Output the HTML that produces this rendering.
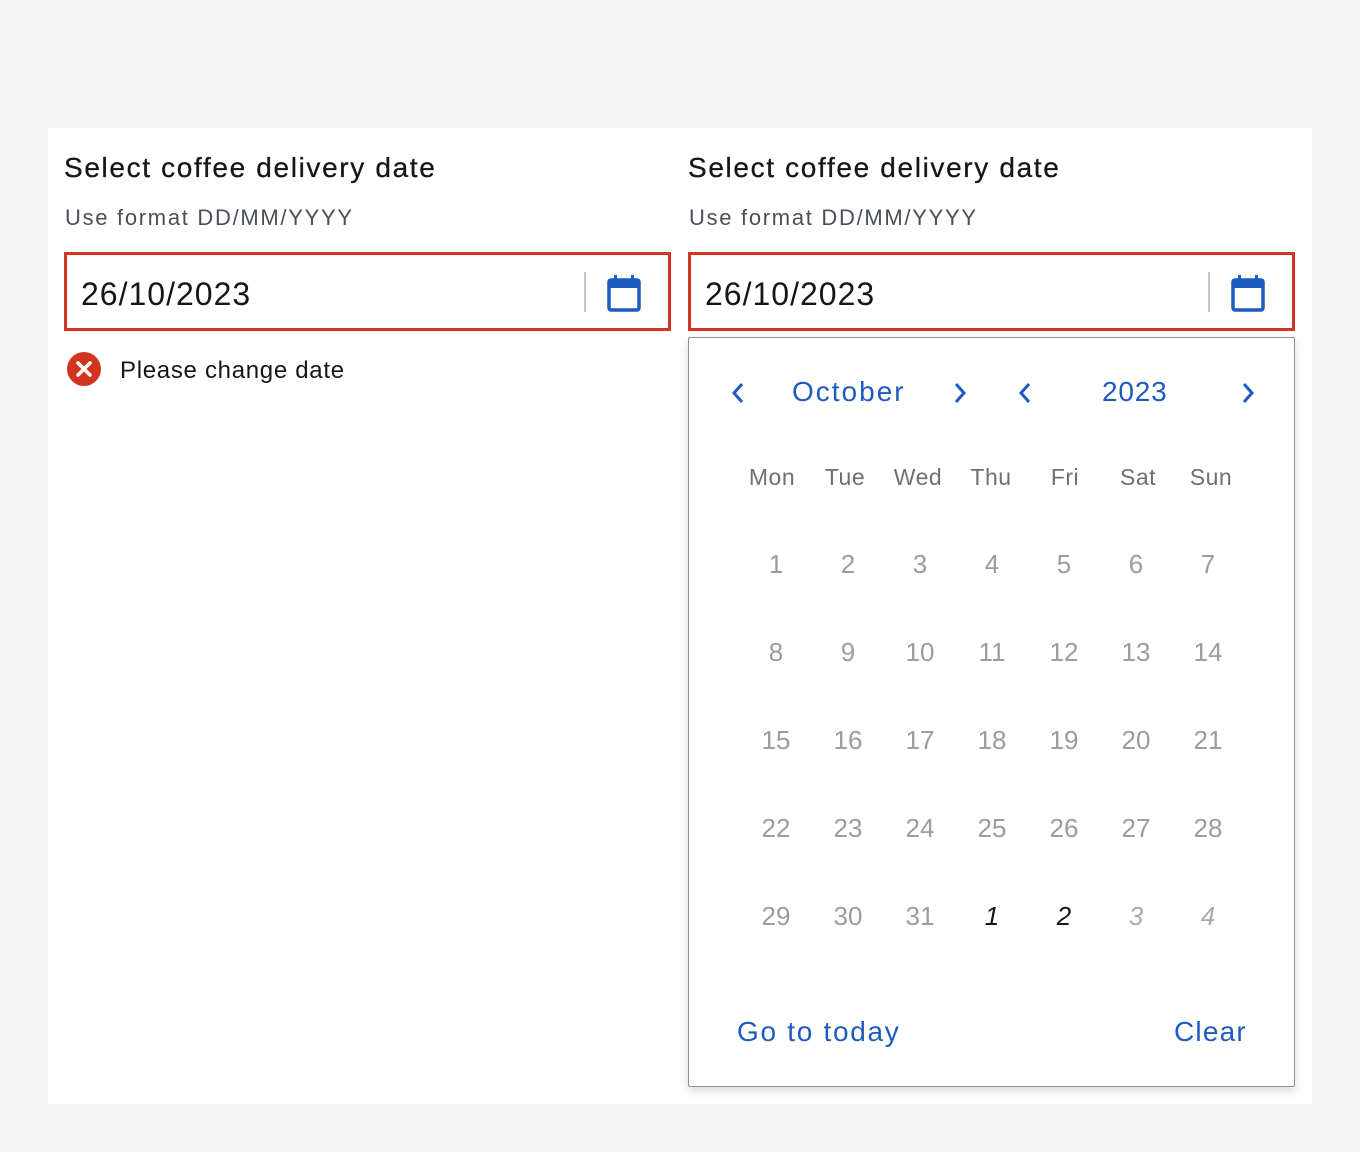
<!DOCTYPE html>
<html><head><style>
body{margin:0;width:1360px;height:1152px;background:#f4f4f4;font-family:"Liberation Sans","DejaVu Sans",sans-serif;position:relative;overflow:hidden}
.panel{position:absolute;left:48px;top:128px;width:1264px;height:976px;background:#fff}
.a{position:absolute;white-space:nowrap}
.t{font-size:28px;color:#161616;letter-spacing:1.65px;-webkit-text-stroke:0.3px #161616}
.h{font-size:22px;color:#4a4f57;letter-spacing:1.7px}
.inp{position:absolute;top:252px;width:601px;height:73px;border:3px solid #d2351f;background:#fff}
.inp .v{position:absolute;left:14px;top:21px;font-size:32px;color:#161616;letter-spacing:1px}
.inp .sep{position:absolute;left:517px;top:17px;width:2px;height:40px;background:#c6c6c6}
.inp svg{position:absolute;left:539px;top:18px}
.cal{position:absolute;left:688px;top:337px;width:605px;height:748px;border:1px solid #8d9199;border-radius:2px;background:#fff;box-shadow:0 4px 10px rgba(0,0,0,.15)}
.b{color:#1d5bbf}
.c{position:absolute;width:60px;text-align:center;font-size:26px;color:#9a9ca0}
.d{position:absolute;width:72px;text-align:center;font-size:23px;color:#6a6f78;letter-spacing:0.5px}
</style></head><body>
<div class="panel"></div>
<div class="a t" style="left:64px;top:152px">Select coffee delivery date</div>
<div class="a t" style="left:688px;top:152px">Select coffee delivery date</div>
<div class="a h" style="left:65px;top:205px">Use format DD/MM/YYYY</div>
<div class="a h" style="left:689px;top:205px">Use format DD/MM/YYYY</div>
<div class="inp" style="left:64px"><div class="v">26/10/2023</div><div class="sep"></div>
<svg width="36" height="40" viewBox="0 0 36 40"><rect x="3" y="7" width="30" height="30" rx="2" fill="none" stroke="#1d5bbf" stroke-width="3.5"/><rect x="3" y="7" width="30" height="8" fill="#1d5bbf"/><rect x="8" y="2" width="3" height="7" fill="#1d5bbf"/><rect x="25" y="2" width="3" height="7" fill="#1d5bbf"/></svg></div>
<div class="inp" style="left:688px"><div class="v">26/10/2023</div><div class="sep"></div>
<svg width="36" height="40" viewBox="0 0 36 40"><rect x="3" y="7" width="30" height="30" rx="2" fill="none" stroke="#1d5bbf" stroke-width="3.5"/><rect x="3" y="7" width="30" height="8" fill="#1d5bbf"/><rect x="8" y="2" width="3" height="7" fill="#1d5bbf"/><rect x="25" y="2" width="3" height="7" fill="#1d5bbf"/></svg></div>
<svg class="a" style="left:66px;top:351px" width="36" height="36"><circle cx="18" cy="18" r="17" fill="#d2351f"/><path d="M12 12L24 24M24 12L12 24" stroke="#fff" stroke-width="3.5" stroke-linecap="round"/></svg>
<div class="a" style="left:120px;top:357px;font-size:24px;color:#161616;letter-spacing:0.7px">Please change date</div>
<div class="cal"></div>
<svg class="a" style="left:728px;top:381px" width="20" height="24"><path d="M14 3L6 12L14 21" fill="none" stroke="#1d5bbf" stroke-width="3"/></svg>
<svg class="a" style="left:950px;top:381px" width="20" height="24"><path d="M6 3L14 12L6 21" fill="none" stroke="#1d5bbf" stroke-width="3"/></svg>
<svg class="a" style="left:1015px;top:381px" width="20" height="24"><path d="M14 3L6 12L14 21" fill="none" stroke="#1d5bbf" stroke-width="3"/></svg>
<svg class="a" style="left:1238px;top:381px" width="20" height="24"><path d="M6 3L14 12L6 21" fill="none" stroke="#1d5bbf" stroke-width="3"/></svg>
<div class="a b" style="left:792px;top:376px;font-size:28px;letter-spacing:2px">October</div>
<div class="a b" style="left:1102px;top:376px;font-size:28px;letter-spacing:0.8px">2023</div>
<div class="d" style="left:736px;top:464px">Mon</div><div class="d" style="left:809px;top:464px">Tue</div><div class="d" style="left:882px;top:464px">Wed</div><div class="d" style="left:955px;top:464px">Thu</div><div class="d" style="left:1029px;top:464px">Fri</div><div class="d" style="left:1102px;top:464px">Sat</div><div class="d" style="left:1175px;top:464px">Sun</div>
<div id="g"></div>
<script>
var h='',n=1;for(var r=0;r<5;r++)for(var c=0;c<7;c++){var t=n<=31?n:n-31,s='';if(n>31){s=';font-style:italic;'+(n<=33?'color:#161616':'color:#a8aab0')}h+='<div class="c" style="left:'+(746+c*72)+'px;top:'+(549+r*88)+'px'+s+'">'+t+'</div>';n++}
document.getElementById('g').innerHTML=h;
</script>
<div class="a b" style="left:737px;top:1016px;font-size:28px;letter-spacing:1.7px">Go to today</div>
<div class="a b" style="left:1174px;top:1016px;font-size:28px;letter-spacing:1.2px">Clear</div>
</body></html>
